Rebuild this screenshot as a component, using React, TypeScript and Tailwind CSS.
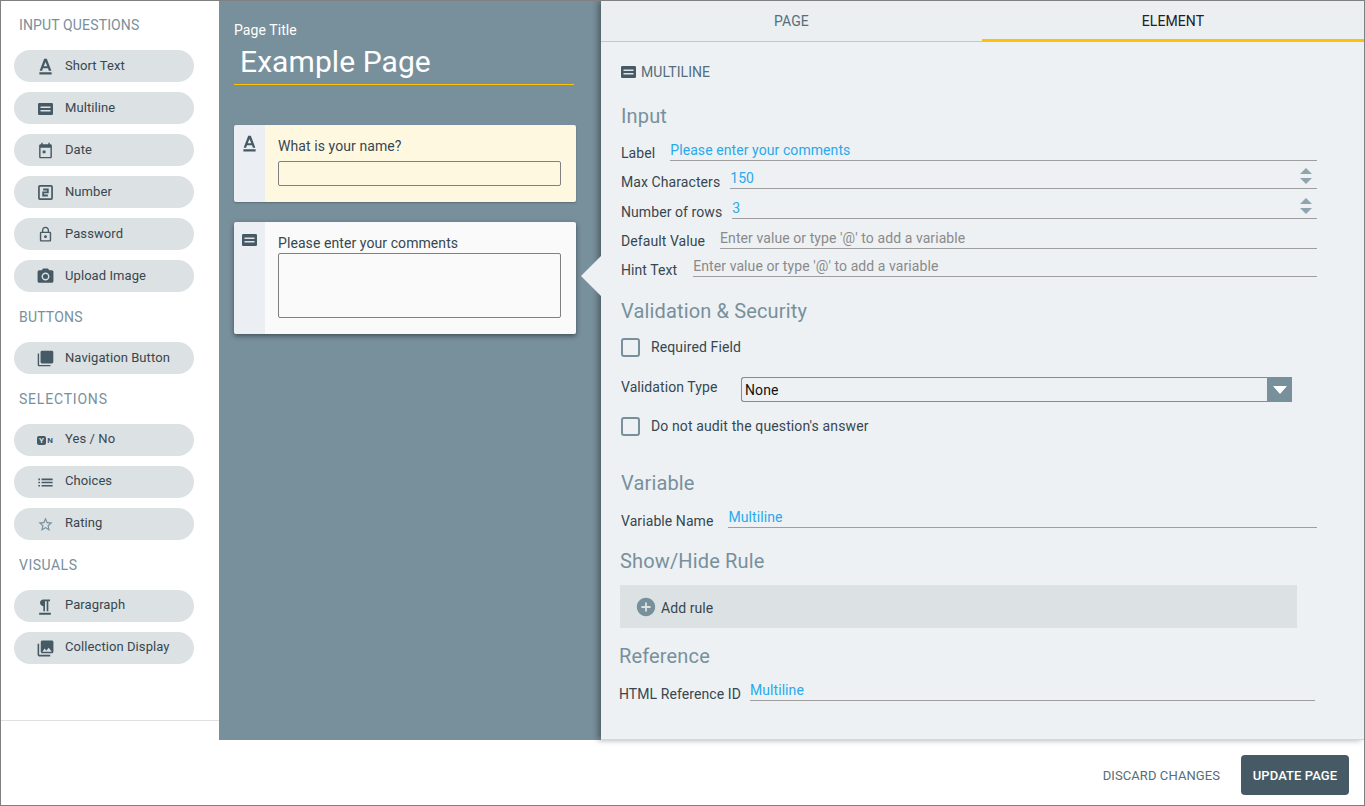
import React from 'react';

type IconProps = { className?: string };

function Svg({ d, className }: { d: string; className?: string }) {
  return (
    <svg viewBox="0 0 24 24" className={className} fill="currentColor">
      <path d={d} />
    </svg>
  );
}

const TextIcon = ({ className }: IconProps) => (
  <Svg className={className} d="M5 18.600v2.400h14v-2.400H5zM10.500 3h3l5.200 13.800h-2.900l-.9-2.800H9.100l-.9 2.800H5.300L10.500 3zM12 6.800L10 11.800h4L12 6.800z" />
);

const MultilineIcon = ({ className }: IconProps) => (
  <svg viewBox="0 0 15 12" className={className}>
    <rect width="15" height="12" rx="1.200" fill="currentColor" />
    <rect x="2.500" y="3.500" width="10" height="1.500" fill="#dde2e5" />
    <rect x="2.500" y="7" width="10" height="1.500" fill="#dde2e5" />
  </svg>
);

const DateIcon = ({ className }: IconProps) => (
  <Svg className={className} d="M12 12H8v4h4v-4zM16 1v2H8V1H6v2H5c-1.110 0-1.990.9-1.990 2L3 21c0 1.100.89 2 2 2h14c1.100 0 2-.9 2-2V5c0-1.100-.9-2-2-2h-1V1h-2zm3 20H5V8h14v13z" />
);

const NumberIcon = ({ className }: IconProps) => (
  <svg viewBox="0 0 16 16" className={className} fill="none" stroke="currentColor">
    <rect x="1" y="1" width="14" height="14" rx="1" strokeWidth="1.800" />
    <path d="M5.500 4.800h5v3h-5v3.400h5" strokeWidth="1.900" />
  </svg>
);

const LockIcon = ({ className }: IconProps) => (
  <Svg className={className} d="M12 17c1.100 0 2-.9 2-2s-.9-2-2-2-2 .9-2 2 .9 2 2 2zm6-9h-1V6c0-2.760-2.240-5-5-5S7 3.240 7 6v2H6c-1.100 0-2 .9-2 2v10c0 1.100.9 2 2 2h12c1.100 0 2-.9 2-2V10c0-1.100-.9-2-2-2zM8.900 6c0-1.710 1.390-3.100 3.100-3.100s3.100 1.390 3.100 3.100v2H8.900V6zM18 20H6V10h12v10z" />
);

const CameraIcon = ({ className }: IconProps) => (
  <svg viewBox="0 0 24 24" className={className} fill="currentColor">
    <circle cx="12" cy="12" r="3.200" />
    <path d="M9 2L7.170 4H4c-1.100 0-2 .9-2 2v12c0 1.100.9 2 2 2h16c1.100 0 2-.9 2-2V6c0-1.100-.9-2-2-2h-3.170L15 2H9zm3 15c-2.760 0-5-2.240-5-5s2.240-5 5-5 5 2.240 5 5-2.240 5-5 5z" />
  </svg>
);

const CopyIcon = ({ className }: IconProps) => (
  <Svg className={className} d="M3 5H1v16c0 1.100.9 2 2 2h16v-2H3V5zm18-4H7c-1.100 0-2 .9-2 2v14c0 1.100.9 2 2 2h14c1.100 0 2-.9 2-2V3c0-1.100-.9-2-2-2z" />
);

const YesNoIcon = ({ className }: IconProps) => (
  <span className={`flex items-center ${className}`}>
    <span className="flex h-[9px] w-[9px] items-center justify-center rounded-[2px] bg-[#455a64] text-[8px] leading-none font-bold text-[#dde2e5]">
      Y
    </span>
    <span className="ml-px text-[8px] leading-none font-bold text-[#455a64]">N</span>
  </span>
);

const ListIcon = ({ className }: IconProps) => (
  <Svg className={className} d="M3 13h2v-2H3v2zm0 4h2v-2H3v2zm0-8h2V7H3v2zm4 4h14v-2H7v2zm0 4h14v-2H7v2zM7 7v2h14V7H7z" />
);

const StarIcon = ({ className }: IconProps) => (
  <Svg className={className} d="M22 9.240l-7.190-.62L12 2 9.190 8.630 2 9.240l5.460 4.730L5.820 21 12 17.270 18.180 21l-1.630-7.030L22 9.240zM12 15.400l-3.760 2.270 1-4.280-3.320-2.880 4.380-.38L12 6.100l1.710 4.040 4.380.38-3.320 2.880 1 4.280L12 15.400z" />
);

const ParagraphIcon = ({ className }: IconProps) => (
  <Svg className={className} d="M10 11v6h2V5h2v12h2V5h2V3h-8C7.800 3 6 4.800 6 7s1.800 4 4 4zM5 19h14v2.200H5z" />
);

const CollectionIcon = ({ className }: IconProps) => (
  <Svg className={className} d="M22 16V4c0-1.100-.9-2-2-2H8c-1.100 0-2 .9-2 2v12c0 1.100.9 2 2 2h12c1.100 0 2-.9 2-2zm-11-4l2.030 2.710L16 11l4 5H8l3-4zM2 6v14c0 1.100.9 2 2 2h14v-2H4V6H2z" />
);

const groups = [
  {
    title: 'INPUT QUESTIONS',
    titleClass: 'tracking-[0.14px]',
    labelClass: 'mb-px',
    items: [
      { label: 'Short Text', Icon: TextIcon, size: 'size-[21px]' },
      { label: 'Multiline', Icon: MultilineIcon, size: 'h-3 w-[15px]' },
      { label: 'Date', Icon: DateIcon, size: 'size-[17px]' },
      { label: 'Number', Icon: NumberIcon, size: 'size-[15px]' },
      { label: 'Password', Icon: LockIcon, size: 'size-[17px]' },
      { label: 'Upload Image', Icon: CameraIcon, size: 'size-[19px]' },
    ],
  },
  {
    title: 'BUTTONS',
    titleClass: 'tracking-[0.2px]',
    labelClass: 'mb-px',
    items: [{ label: 'Navigation Button', Icon: CopyIcon, size: 'size-[17px]' }],
  },
  {
    title: 'SELECTIONS',
    titleClass: 'tracking-[0.8px]',
    labelClass: 'mb-[2px]',
    items: [
      { label: 'Yes / No', Icon: YesNoIcon, size: '' },
      { label: 'Choices', Icon: ListIcon, size: 'size-[19px]' },
      { label: 'Rating', Icon: StarIcon, size: 'size-[17px] text-[#78909c]' },
    ],
  },
  {
    title: 'VISUALS',
    titleClass: 'tracking-[0.5px]',
    labelClass: 'mb-[2px]',
    items: [
      { label: 'Paragraph', Icon: ParagraphIcon, size: 'size-[20px]' },
      { label: 'Collection Display', Icon: CollectionIcon, size: 'size-[19px]' },
    ],
  },
];

function Sidebar() {
  return (
    <aside className="flex w-[218px] shrink-0 flex-col bg-white">
      <div className="flex-1 pt-[14px] pl-[13px]">
        {groups.map((group, i) => (
          <div key={group.title}>
            <h3 className={`${i === 0 ? '' : 'mt-[15px]'} mb-[15px] h-5 pl-[5px] text-sm leading-5 text-[#78909c] ${group.titleClass}`}>
              {group.title}
            </h3>
            <div className="flex flex-col gap-[10px]">
              {group.items.map(({ label, Icon, size }) => (
                <div key={label} className="flex h-8 w-[180px] items-center rounded-full bg-[#dce1e3] text-[#455a64]">
                  <div className="mt-px flex w-[51px] shrink-0 items-center justify-center pl-[11px]">
                    <Icon className={size} />
                  </div>
                  <span className={`text-[13px] leading-5 text-[#37474f] ${group.labelClass}`}>{label}</span>
                </div>
              ))}
            </div>
          </div>
        ))}
      </div>
      <div className="h-5 border-t border-[#e0e0e0]" />
    </aside>
  );
}

function PagePreview() {
  return (
    <main className="relative w-[382px] shrink-0 bg-[#78909c] pt-[19px] pl-[15px]">
      <p className="h-5 text-sm leading-5 text-white">Page Title</p>
      <div className="mt-[5px] h-[40px] w-[340px] border-b border-[#ffc107] pl-[6px] text-[30px] leading-[34px] text-white">
        Example Page
      </div>
      <div className="mt-[40px] flex h-[77px] w-[342px] overflow-hidden rounded-[2px] shadow-[0_1px_2px_rgba(0,0,0,0.25)]">
        <div className="flex w-[31px] shrink-0 justify-center bg-[#ebeff3] pt-[8px] text-[#455a64]">
          <TextIcon className="size-[21px]" />
        </div>
        <div className="flex-1 bg-[#fff8e1] pt-[11px] pl-[13px]">
          <p className="h-5 text-sm leading-5 text-[#37474f]">What is your name?</p>
          <div className="mt-[5px] h-[25px] w-[283px] rounded-[2px] border border-[#808080]" />
        </div>
      </div>
      <div className="mt-5 flex h-[112px] w-[342px] overflow-hidden rounded-[2px] shadow-[0_2px_5px_rgba(0,0,0,0.45)]">
        <div className="flex w-[31px] shrink-0 justify-center bg-[#ebeff3] pt-[12px] text-[#455a64]">
          <MultilineIcon className="h-3 w-[15px]" />
        </div>
        <div className="flex-1 bg-[#fafafa] pt-[11px] pl-[13px]">
          <p className="h-5 text-sm leading-5 text-[#37474f]">Please enter your comments</p>
          <div className="h-[65px] w-[283px] rounded-[2px] border border-[#808080]" />
        </div>
      </div>
      <svg viewBox="0 0 20 40" className="absolute top-[255px] right-0 z-20 h-10 w-5">
        <polygon points="20,0 0,20 20,40" fill="#edf1f4" />
      </svg>
    </main>
  );
}

function SectionTitle({ children, className = '' }: { children: React.ReactNode; className?: string }) {
  return <h2 className={`h-7 text-xl leading-7 tracking-[0.15px] text-[#78909c] ${className}`}>{children}</h2>;
}

function Spinner() {
  return (
    <svg viewBox="0 0 12 16" className="-mt-px mr-[5px] h-4 w-3 shrink-0" fill="#90a4ae">
      <polygon points="6,0 12,6 0,6" />
      <polygon points="0,10 12,10 6,16" />
    </svg>
  );
}

function FieldRow({
  label,
  value,
  placeholder,
  gap,
  spinner,
  className = '',
}: {
  label: string;
  value?: string;
  placeholder?: string;
  gap: string;
  spinner?: boolean;
  className?: string;
}) {
  return (
    <div className={`flex w-[696px] items-start ${className}`}>
      <span className="h-5 shrink-0 self-end text-sm leading-5 text-[#37474f]">{label}</span>
      <div className={`flex h-5 flex-1 items-start justify-between border-b border-[#9e9e9e] text-sm leading-[19px] ${gap}`}>
        {value ? (
          <span className="text-[#29a9eb]">{value}</span>
        ) : (
          <span className="text-[#8a8a8a]">{placeholder}</span>
        )}
        {spinner && <Spinner />}
      </div>
    </div>
  );
}

function CheckRow({ label, className = '' }: { label: string; className?: string }) {
  return (
    <div className={`flex h-[19px] items-center ${className}`}>
      <span className="size-[19px] rounded-[3px] border-2 border-[#78909c]" />
      <span className="mb-px ml-[11px] text-sm leading-5 tracking-[0.12px] text-[#37474f]">{label}</span>
    </div>
  );
}

function ElementPanel() {
  return (
    <section className="relative z-10 flex-1 border-b border-[#d5d8da] bg-[#edf1f4] shadow-[-3px_0_6px_rgba(0,0,0,0.35)]">
      <div className="flex h-[41px] bg-[#ebeff2] text-sm leading-[40px]">
        <div className="w-[381px] border-b border-[#c4c8ca] text-center text-[#546e7a]">PAGE</div>
        <div className="flex-1 border-b-[3px] border-[#ffc107] text-center text-[#212121]">ELEMENT</div>
      </div>
      <div className="pl-5">
        <div className="mt-5 flex h-5 items-center text-sm text-[#546e7a]">
          <MultilineIcon className="h-3 w-[15px] text-[#455a64]" />
          <span className="ml-[5px]">MULTILINE</span>
        </div>
        <SectionTitle className="mt-5">Input</SectionTitle>
        <FieldRow className="mt-[11px] h-[22px]" label="Label" value="Please enter your comments" gap="ml-[15px]" />
        <FieldRow className="mt-[6px] h-[23px]" label="Max Characters" value="150" gap="ml-[10px]" spinner />
        <FieldRow className="mt-[7px] h-[23px]" label="Number of rows" value="3" gap="ml-[10px]" spinner />
        <FieldRow className="mt-[7px] h-[22px]" label="Default Value" placeholder="Enter value or type '@' to add a variable" gap="ml-[15px]" />
        <FieldRow className="mt-[6px] h-[23px]" label="Hint Text" placeholder="Enter value or type '@' to add a variable" gap="ml-4" />

        <SectionTitle className="mt-[17px]">Validation &amp; Security</SectionTitle>
        <CheckRow className="mt-[13px]" label="Required Field" />
        <div className="mt-5 flex h-[25px] items-start">
          <span className="w-[120px] text-sm leading-5 text-[#37474f]">Validation Type</span>
          <div className="flex h-[25px] w-[551px] rounded-l-[3px] border border-r-0 border-[#78909c]">
            <span className="flex-1 pl-[3px] text-sm leading-6 text-[#111]">None</span>
            <span className="-my-px flex w-[25px] items-center justify-center bg-[#78909c]">
              <svg viewBox="0 0 14 8" className="h-2 w-[14px]" fill="#fff">
                <polygon points="0,0 14,0 7,8" />
              </svg>
            </span>
          </div>
        </div>
        <CheckRow className="mt-[15px]" label="Do not audit the question's answer" />

        <SectionTitle className="mt-[33px]">Variable</SectionTitle>
        <FieldRow className="mt-[11px] h-[23px]" label="Variable Name" value="Multiline" gap="ml-[15px]" />

        <SectionTitle className="mt-4 -ml-px">Show/Hide Rule</SectionTitle>
        <div className="mt-[10px] -ml-px flex h-[43px] w-[677px] items-center bg-[#dce1e3] pl-[15px]">
          <svg viewBox="0 0 24 24" className="size-[22px] text-[#78909c]" fill="currentColor">
            <path d="M12 2C6.480 2 2 6.480 2 12s4.480 10 10 10 10-4.480 10-10S17.520 2 12 2zm5 11h-4v4h-2v-4H7v-2h4V7h2v4h4v2z" />
          </svg>
          <span className="mt-[2px] ml-1 text-sm leading-5 text-[#37474f]">Add rule</span>
        </div>

        <SectionTitle className="mt-[14px] -ml-[2px]">Reference</SectionTitle>
        <FieldRow className="mt-[11px] -ml-[2px] h-[23px]" label="HTML Reference ID" value="Multiline" gap="ml-[9px]" />
      </div>
    </section>
  );
}

export default function App() {
  return (
    <div
      className="flex h-[806px] w-[1365px] flex-col overflow-hidden border border-[#808080] bg-white tracking-[0.08px]"
      style={{ fontFamily: 'Roboto, sans-serif' }}
    >
      <div className="flex h-[739px] shrink-0">
        <Sidebar />
        <PagePreview />
        <ElementPanel />
      </div>
      <footer className="flex flex-1 items-start justify-end bg-white pt-[15px] pr-[15px]">
        <span className="mt-[12px] mr-[21px] text-[13px] leading-[18px] text-[#546e7a]">DISCARD CHANGES</span>
        <button className="h-10 w-[108px] rounded-[4px] bg-[#455a64] pt-px text-[13px] font-medium text-white">
          UPDATE PAGE
        </button>
      </footer>
    </div>
  );
}
